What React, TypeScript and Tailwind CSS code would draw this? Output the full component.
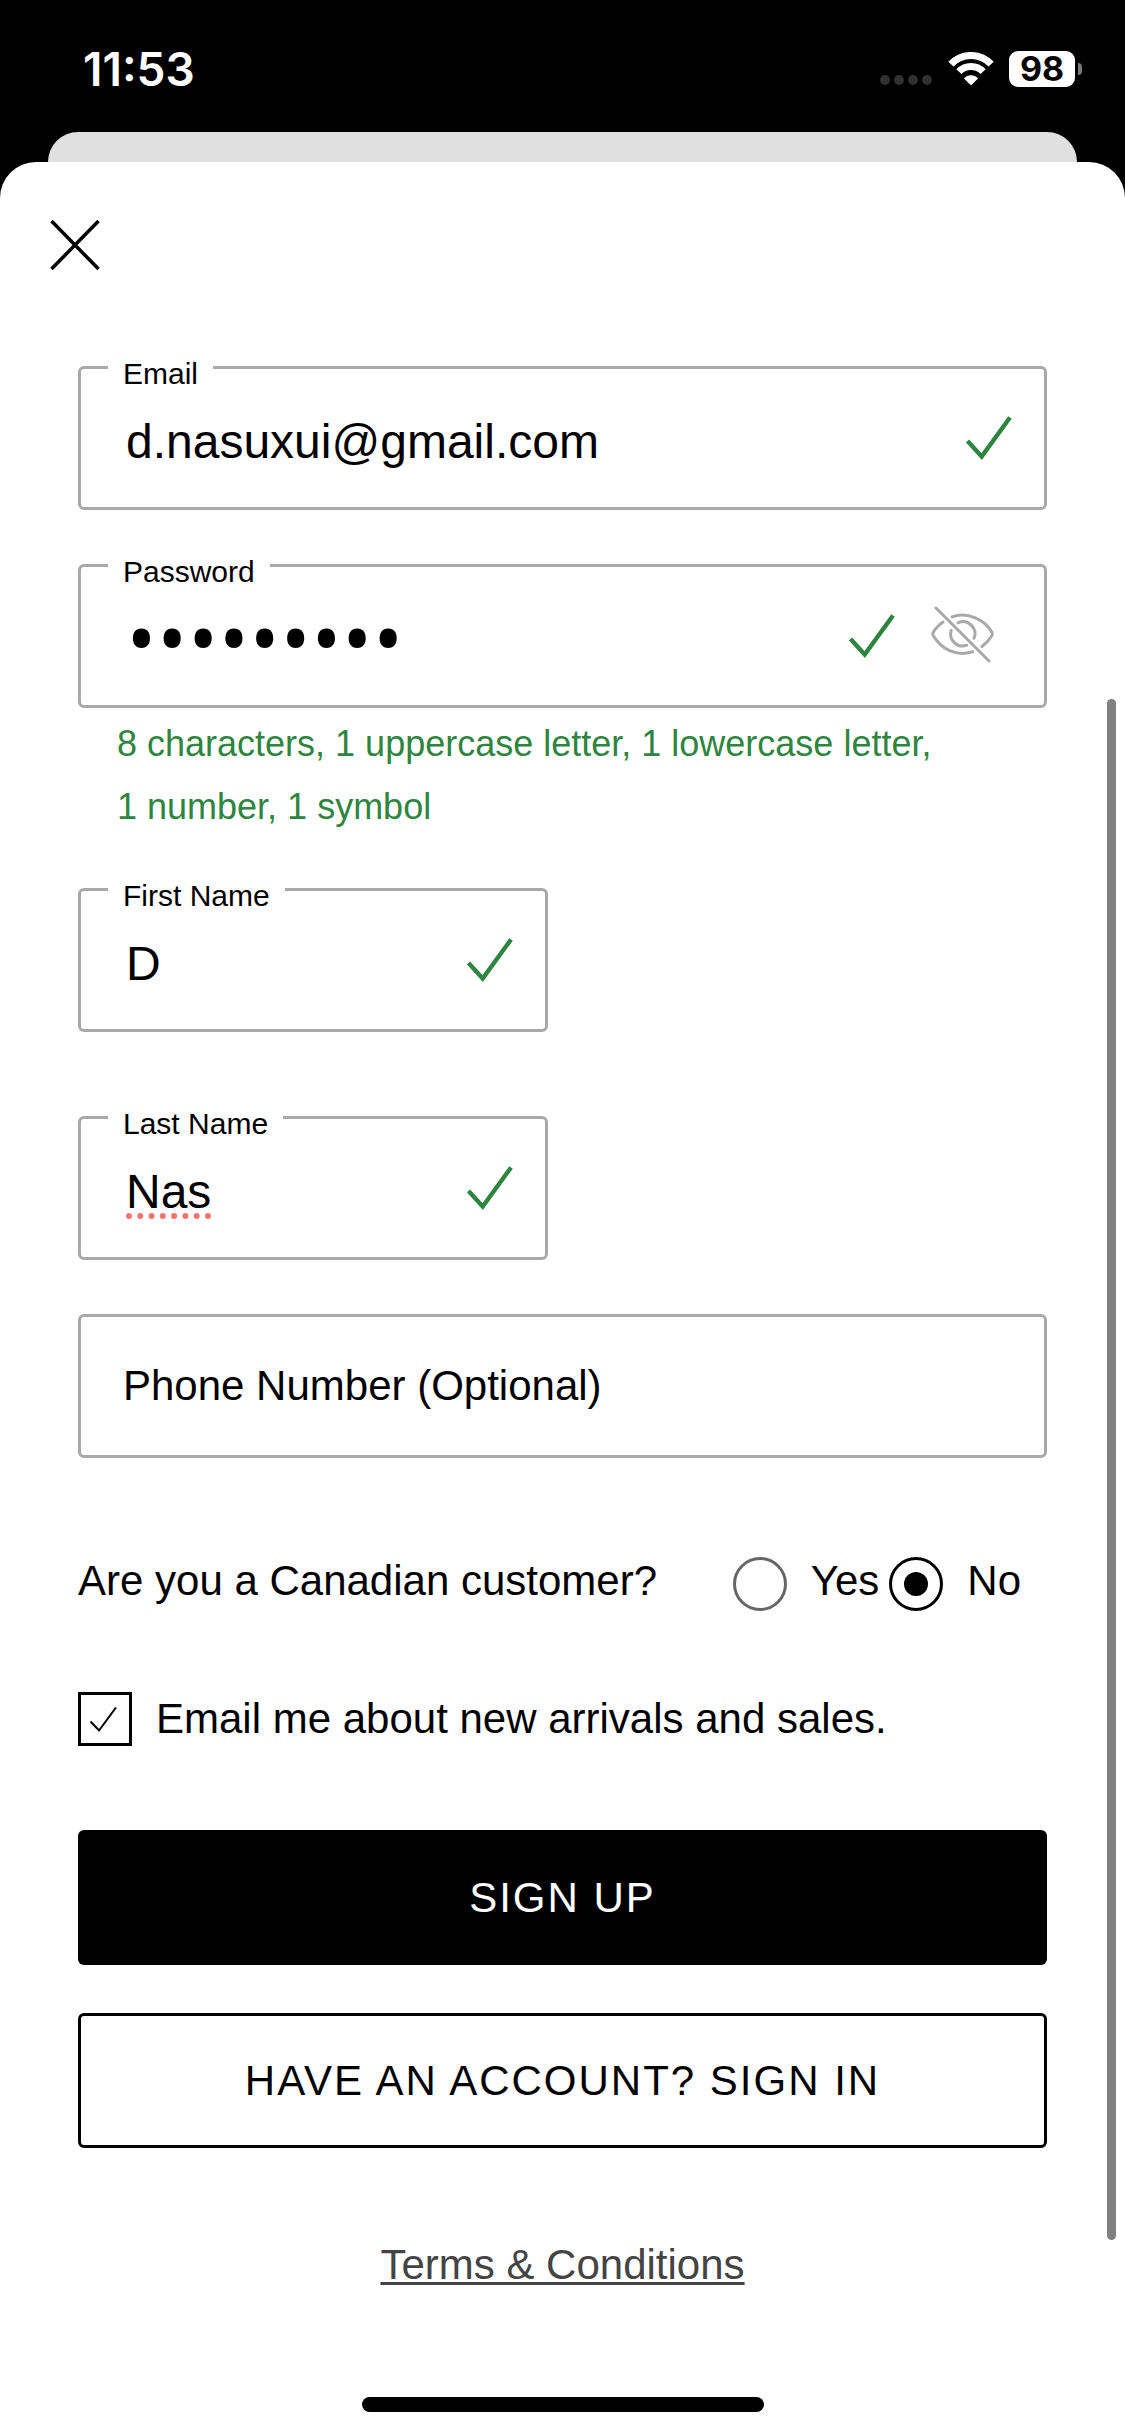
import { useState } from "react";
import type { ReactNode } from "react";
import clsx from "clsx";

function WifiIcon() {
  return (
    <svg width="46" height="34" viewBox="0 0 46 34" fill="none" stroke="white" strokeWidth="7" aria-hidden="true">
      <path d="M2.9 12.2A27.5 27.5 0 0 1 43.1 12.2" />
      <path d="M10.9 19.7A16.5 16.5 0 0 1 35.1 19.7" />
      <path d="M16 26.4A9.5 9.5 0 0 1 30 26.4L24 32.6Q23 33.4 22 32.6Z" fill="white" stroke="none" />
    </svg>
  );
}

function CheckIcon() {
  return (
    <svg width="46" height="44" viewBox="0 0 46 44" fill="none" stroke="#2e8540" strokeWidth="4.4" className="shrink-0" aria-hidden="true">
      <path d="M1.5 25L15.7 40.5L44 1.5" />
    </svg>
  );
}

function EyeOffIcon() {
  return (
    <svg width="63" height="57" viewBox="0 0 63 57" fill="none" stroke="#a9a9a9" strokeWidth="3" strokeLinecap="round" aria-hidden="true">
      <path d="M5 2L58 55" />
      <path d="M21 10.8C37 5.5 54 13.5 61 26.5Q61.6 28 61 29.5Q57.5 35.5 51 40.5" />
      <path d="M12 16Q5 21 2.2 26.5Q1.4 28 2.2 29.5C10 43 25 51 41.5 45.7" />
      <path d="M27 16.8A12 12 0 0 1 43 32.3" />
      <path d="M20.2 24.3A12 12 0 0 0 35.8 39.2" />
    </svg>
  );
}

function StatusBar() {
  return (
    <div className="flex h-[132px] items-center justify-between pt-1.5 pr-[43px] pl-[83px] font-['Inter',sans-serif] text-white">
      <span className="text-[46px] leading-[48px] font-semibold">11:53</span>
      <div className="flex items-center">
        <div className="mt-[22px] flex gap-1">
          <span className="size-2.5 rounded-full bg-[#303030]" />
          <span className="size-2.5 rounded-full bg-[#303030]" />
          <span className="size-2.5 rounded-full bg-[#303030]" />
          <span className="size-2.5 rounded-full bg-[#303030]" />
        </div>
        <div className="mr-[15px] ml-4"><WifiIcon /></div>
        <span className="flex h-9 w-[66px] items-center justify-center rounded-[9px] bg-white text-[34px] leading-9 font-bold text-black">98</span>
        <span className="ml-[3px] h-3 w-1 rounded-r-full bg-[#7a7a7a]" />
      </div>
    </div>
  );
}

function Field({
  id,
  label,
  type = "text",
  value = "",
  valid,
  inputClassName = "text-[48px] pt-1.5",
  className,
  children,
}: {
  id: string;
  label: string;
  type?: string;
  value?: string;
  valid?: boolean;
  inputClassName?: string;
  className?: string;
  children?: ReactNode;
}) {
  const [text, setText] = useState(value);
  return (
    <div className={clsx("relative flex h-36 items-center rounded-md border-3 border-[#a9a9a9] bg-white pr-8", className)}>
      <label
        htmlFor={id}
        className={clsx(
          "absolute left-[27px] bg-white px-[15px]",
          text ? "-top-2.5 text-[30px] leading-[30px]" : "text-[42px] leading-[48px]",
        )}
      >
        {label}
      </label>
      <input
        id={id}
        type={type}
        value={text}
        spellCheck={false}
        onChange={(e) => setText(e.target.value)}
        className={clsx("h-full w-full min-w-0 flex-1 bg-transparent pl-[45px] outline-none", inputClassName)}
      />
      {valid && <CheckIcon />}
      {children}
    </div>
  );
}

function Radio({ label, value, checked, onSelect }: { label: string; value: string; checked: boolean; onSelect: (value: string) => void }) {
  return (
    <label className="flex gap-6">
      <input
        type="radio"
        name="canadian"
        value={value}
        checked={checked}
        onChange={() => onSelect(value)}
        className="grid size-[54px] appearance-none place-content-center rounded-full border-3 border-[#666] before:size-6 before:rounded-full checked:border-black checked:before:bg-black"
      />
      {label}
    </label>
  );
}

export default function App() {
  const [showPassword, setShowPassword] = useState(false);
  const [canadian, setCanadian] = useState("no");
  const [subscribed, setSubscribed] = useState(true);

  return (
    <div className="flex min-h-screen flex-col bg-black font-['Liberation_Sans',Arial,sans-serif] text-black">
      <StatusBar />
      <div className="mx-12 h-[30px] rounded-t-[30px] bg-[#e0e0e0]" />

      <main className="relative flex flex-1 flex-col rounded-t-[36px] bg-white">
        <div className="flex px-[50px] pt-[58px]">
          <button type="button" aria-label="Close">
            <svg width="50" height="50" viewBox="0 0 50 50" stroke="black" strokeWidth="3.5" aria-hidden="true">
              <path d="M1.5 1L48.5 49M48.5 1L1.5 49" />
            </svg>
          </button>
        </div>

        <form className="mt-24 flex flex-col px-[78px] text-[42px] leading-[48px]" onSubmit={(e) => e.preventDefault()}>
          <Field id="email" label="Email" type="email" value="d.nasuxui@gmail.com" valid />

          <Field
            id="password"
            label="Password"
            type={showPassword ? "text" : "password"}
            value="Passw0rd!"
            valid
            className="mt-[54px]"
            inputClassName={showPassword ? "text-[48px] pt-1.5" : "font-['Open_Sans',sans-serif] text-[82px]"}
          >
            <button
              type="button"
              aria-label={showPassword ? "Hide password" : "Show password"}
              onClick={() => setShowPassword(!showPassword)}
              className="mr-[18px] mb-1 ml-9"
            >
              <EyeOffIcon />
            </button>
          </Field>
          <p className="mt-1 pl-[39px] text-[36px] leading-[63px] text-[#2e8540]">
            8 characters, 1 uppercase letter, 1 lowercase letter, 1&nbsp;number, 1&nbsp;symbol
          </p>

          <div className="mt-[50px] grid grid-cols-2 gap-x-[30px]">
            <Field id="first-name" label="First Name" value="D" valid className="col-start-1" />
            <Field
              id="last-name"
              label="Last Name"
              value="Nas"
              valid
              className="col-start-1 mt-[84px]"
              inputClassName="text-[48px] pt-1.5 underline decoration-[#f7736b] decoration-dotted decoration-[6px] underline-offset-[6px]"
            />
          </div>

          <Field id="phone" label="Phone Number (Optional)" type="tel" className="mt-[54px]" />

          <div role="radiogroup" aria-labelledby="canadian-label" className="mt-[99px] flex items-start justify-between pr-[26px]">
            <span id="canadian-label">Are you a Canadian customer?</span>
            <div className="flex gap-2.5">
              <Radio label="Yes" value="yes" checked={canadian === "yes"} onSelect={setCanadian} />
              <Radio label="No" value="no" checked={canadian === "no"} onSelect={setCanadian} />
            </div>
          </div>

          <label className="mt-[81px] flex items-center gap-6">
            <span className="relative flex">
              <input
                type="checkbox"
                checked={subscribed}
                onChange={(e) => setSubscribed(e.target.checked)}
                className="size-[54px] appearance-none border-3 border-black"
              />
              {subscribed && (
                <svg width="54" height="54" viewBox="0 0 54 54" fill="none" stroke="black" strokeWidth="2" className="pointer-events-none absolute inset-0" aria-hidden="true">
                  <path d="M12.5 29.5L21 38.5L38 15.5" />
                </svg>
              )}
            </span>
            Email me about new arrivals and sales.
          </label>

          <button type="submit" className="mt-[84px] h-[135px] rounded-md bg-black tracking-[2px] text-white">
            SIGN UP
          </button>
          <button type="button" className="mt-12 h-[135px] rounded-md border-3 border-black tracking-[2px]">
            HAVE AN ACCOUNT? SIGN IN
          </button>

          <a href="#terms" className="mt-[93px] self-center text-[#444] underline decoration-3 underline-offset-3 [text-decoration-skip-ink:none]">
            Terms &amp; Conditions
          </a>
        </form>

        {/* scroll thumb */}
        <div className="absolute top-[537px] right-[9px] bottom-[196px] w-[9px] rounded-full bg-[#808080]" />

        {/* home indicator */}
        <div className="mx-auto mt-auto mb-6 h-[15px] w-[402px] rounded-full bg-black" />
      </main>
    </div>
  );
}
